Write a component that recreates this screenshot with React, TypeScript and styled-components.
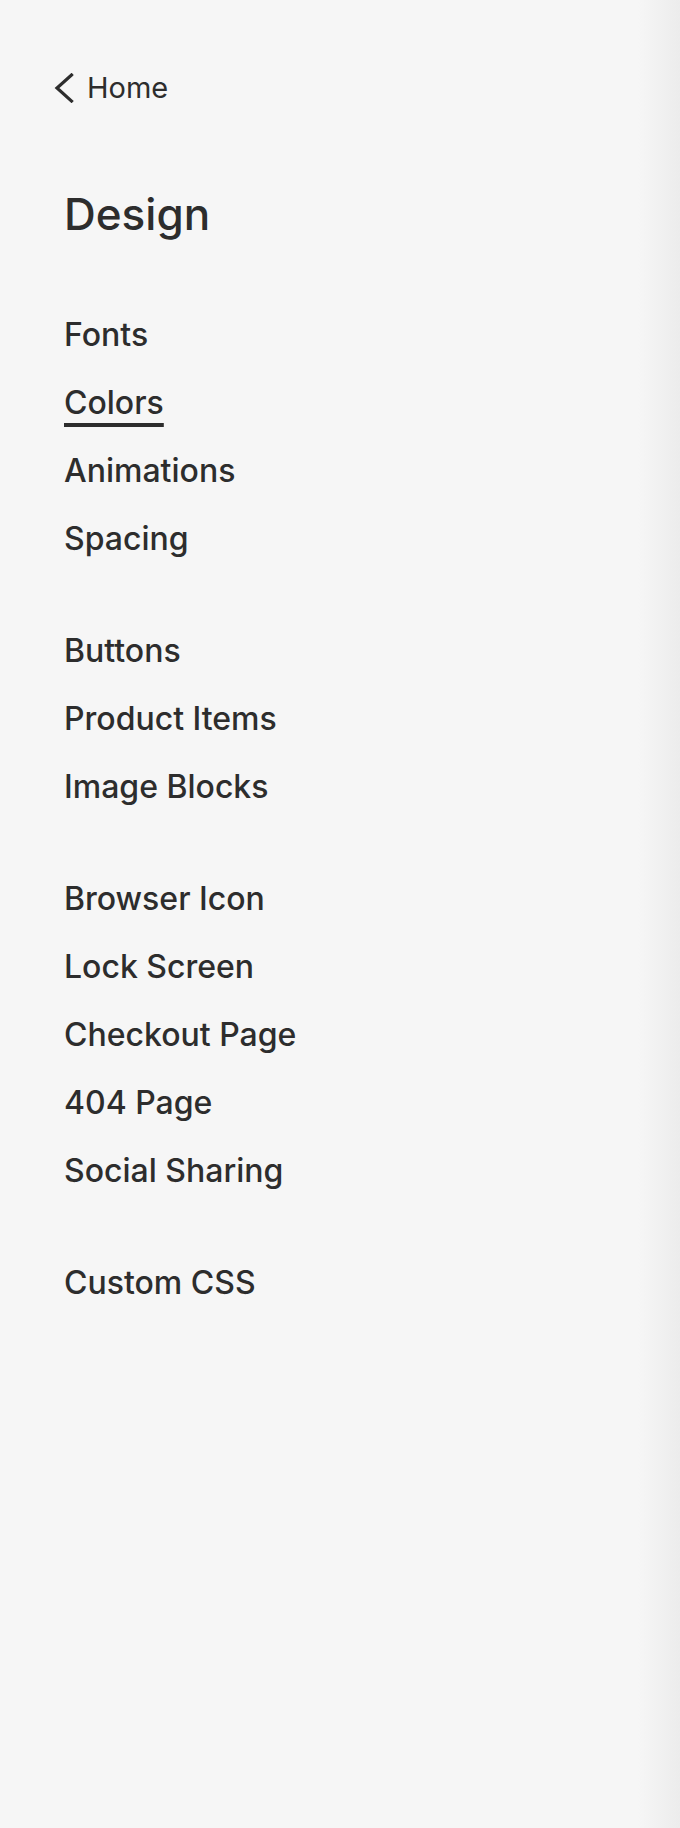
import React from "react";
import styled, { createGlobalStyle } from "styled-components";

const GlobalStyle = createGlobalStyle`
  html, body {
    margin: 0;
    padding: 0;
    background: #f6f6f6;
  }
  * { box-sizing: border-box; }
`;

const Page = styled.div`
  min-height: 1828px;
  width: 100%;
  background: linear-gradient(to right, #f6f6f6 0, #f6f6f6 calc(100% - 42px), #ececec 100%);
  font-family: Inter, "Liberation Sans", Arial, sans-serif;
  color: #2d2d2d;
  padding: 68px 0 0 0;
  display: flex;
  flex-direction: column;
`;

const BackLink = styled.a`
  display: flex;
  align-items: center;
  gap: 13px;
  height: 40px;
  margin-left: 54px;
  font-size: 29px;
  font-weight: 400;
  line-height: 40px;
  color: #2d2d2d;
  text-decoration: none;
  cursor: pointer;
  width: max-content;
`;

const Chevron = styled.svg`
  width: 20px;
  height: 30px;
  flex: none;
`;

const Title = styled.h1`
  margin: 76px 0 0 64px;
  font-size: 44px;
  font-weight: 500;
  line-height: 60px;
  color: #2d2d2d;
`;

const Nav = styled.nav`
  display: flex;
  flex-direction: column;
  gap: 44px;
  margin-top: 57px;
  padding-left: 64px;
`;

const Group = styled.ul`
  list-style: none;
  margin: 0;
  padding: 0;
  display: flex;
  flex-direction: column;
`;

const Item = styled.li<{ $active?: boolean }>`
  height: 68px;
  line-height: 68px;
  font-size: 32px;
  font-weight: 500;
  color: #2d2d2d;
  white-space: nowrap;
  cursor: pointer;
  text-decoration: ${(p) => (p.$active ? "underline" : "none")};
  text-decoration-thickness: 4px;
  text-underline-offset: 9px;
`;

const groups: string[][] = [
  ["Fonts", "Colors", "Animations", "Spacing"],
  ["Buttons", "Product Items", "Image Blocks"],
  ["Browser Icon", "Lock Screen", "Checkout Page", "404 Page", "Social Sharing"],
  ["Custom CSS"],
];

export default function App() {
  return (
    <>
      <GlobalStyle />
      <Page>
        <BackLink>
          <Chevron viewBox="0 0 20 30" fill="none">
            <polyline
              points="17.5,2 3,15 17.5,28"
              stroke="#2d2d2d"
              strokeWidth="3.2"
              strokeLinecap="square"
              strokeLinejoin="miter"
            />
          </Chevron>
          Home
        </BackLink>
        <Title>Design</Title>
        <Nav>
          {groups.map((g, i) => (
            <Group key={i}>
              {g.map((label) => (
                <Item key={label} $active={label === "Colors"}>
                  {label}
                </Item>
              ))}
            </Group>
          ))}
        </Nav>
      </Page>
    </>
  );
}
